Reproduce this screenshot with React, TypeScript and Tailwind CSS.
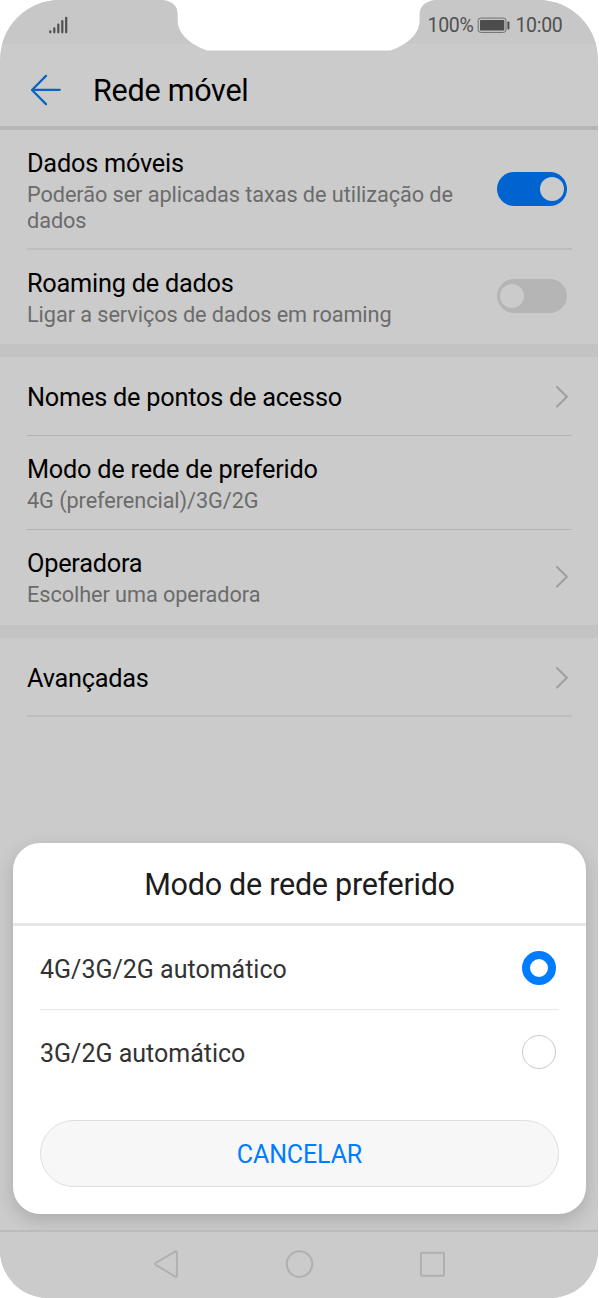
import { useState } from "react";

interface ToggleProps {
  checked: boolean;
  onChange: (checked: boolean) => void;
}

interface OptionProps {
  label: string;
  selected: boolean;
  onSelect: () => void;
}

function SignalIcon() {
  return (
    <svg className="ml-[48px] mt-[15px] h-[20px] w-[21px]" viewBox="0 0 21 20" stroke="#505050" strokeWidth="2.2" strokeLinecap="round">
      <path d="M2.3 16.3v1M6.3 13.3v4M10.3 9.6v7.7M14.3 6v11.3M18.2 2.8v14.5" />
    </svg>
  );
}

function BatteryIcon() {
  return (
    <svg className="h-[17px] w-[34px]" viewBox="0 0 34 17" fill="none">
      <rect x="1.2" y="1.1" width="27.8" height="14.3" rx="2.5" stroke="#6f6f6f" strokeWidth="1" />
      <rect x="3" y="3" width="24.3" height="10.6" rx="0.6" fill="#4c4c4c" />
      <rect x="30.4" y="4.4" width="2" height="8.2" rx="0.8" fill="#4c4c4c" />
    </svg>
  );
}

function BackArrow() {
  return (
    <svg className="h-[32px] w-[32px]" viewBox="0 0 32 32" fill="none" stroke="#0763c5" strokeWidth="2.2" strokeLinecap="round" strokeLinejoin="round">
      <path d="M16 1.9L2 16l14 14.1M2 15.8h27.8" />
    </svg>
  );
}

function Chevron() {
  return (
    <svg className="h-[24px] w-[14px]" viewBox="0 0 14 24" fill="none" stroke="#9f9f9f" strokeWidth="2.1" strokeLinecap="round" strokeLinejoin="round">
      <path d="M2 2.1L11.9 11.8L2 21.5" />
    </svg>
  );
}

function Toggle({ checked, onChange }: ToggleProps) {
  return (
    <button
      role="switch"
      aria-checked={checked}
      onClick={() => onChange(!checked)}
      className={`flex h-[34px] w-[70px] items-center rounded-full ${
        checked ? "justify-end bg-[#0064d0] pr-[3px]" : "justify-start bg-[#b5b5b5] pl-[3px]"
      }`}
    >
      <span className="size-6 rounded-full bg-[#cbcbcb]" />
    </button>
  );
}

function Option({ label, selected, onSelect }: OptionProps) {
  return (
    <button
      role="radio"
      aria-checked={selected}
      onClick={onSelect}
      className="flex h-[84px] w-full items-center justify-between pr-[3px] text-left text-[25px] text-[#333333]"
    >
      <span className="pt-[3px]">{label}</span>
      <span
        className={`size-[34px] rounded-full ${
          selected ? "border-8 border-[#007dff]" : "border-[1.5px] border-[#c9c9c9]"
        }`}
      />
    </button>
  );
}

export default function App() {
  const [mobileData, setMobileData] = useState(true);
  const [roaming, setRoaming] = useState(false);
  const [mode, setMode] = useState("4G/3G/2G automático");

  const titleClass = "text-[25.3px] leading-[30px] tracking-[-0.23px] text-black";
  const subtitleClass = "mt-[3px] text-[21.7px] leading-[26px] tracking-[-0.07px] text-[#6b6b6b]";

  return (
    <div className="h-[1298px] w-[599px] overflow-hidden bg-white font-[Roboto,sans-serif]">
      <div className="relative flex h-full w-[597.5px] flex-col overflow-hidden rounded-t-[60px] rounded-b-[48px] bg-[#cbcbcb]">
        {/* Status bar */}
        <div className="flex h-[44px] shrink-0 justify-between bg-[#c7c7c7]">
          <SignalIcon />
          <div className="flex h-[52px] items-center pr-[35px] text-[19.5px] tracking-[-0.3px] text-[#505050]">
            <span>100%</span>
            <span className="ml-[4px] mr-[4px] -mt-px">
              <BatteryIcon />
            </span>
            <span>10:00</span>
          </div>
        </div>

        {/* Header */}
        <header className="flex h-[86px] shrink-0 items-center border-b-4 border-[#b5b5b5] pt-[10px] pb-[1px] pl-[30px]">
          <BackArrow />
          <h1 className="ml-[31px] pt-[3px] text-[30.5px] tracking-[-0.25px] text-black">Rede móvel</h1>
        </header>

        <div className="flex h-[118px] shrink-0 justify-between pt-[19px] pr-[30.5px] pl-[27px]">
          <div className="w-[450px]">
            <p className={titleClass}>Dados móveis</p>
            <p className={subtitleClass}>
              Poderão ser aplicadas taxas de utilização de
              <br />
              dados
            </p>
          </div>
          <div className="pt-[23px]">
            <Toggle checked={mobileData} onChange={setMobileData} />
          </div>
        </div>
        <div className="mr-[26px] ml-[27px] h-[2px] shrink-0 bg-[#bebebe]" />
        <div className="flex h-[94px] shrink-0 justify-between pt-[19px] pr-[30.5px] pl-[27px]">
          <div>
            <p className={titleClass}>Roaming de dados</p>
            <p className={subtitleClass}>Ligar a serviços de dados em roaming</p>
          </div>
          <div className="pt-[10px]">
            <Toggle checked={roaming} onChange={setRoaming} />
          </div>
        </div>
        <div className="h-[13px] shrink-0 bg-[#c3c3c3]" />

        <div className="flex h-[78px] shrink-0 items-center justify-between pt-[2px] pr-[28.5px] pl-[27px]">
          <p className={`${titleClass} pt-[2px]`}>Nomes de pontos de acesso</p>
          <Chevron />
        </div>
        <div className="mr-[26px] ml-[27px] h-px shrink-0 bg-[#b4b4b4]" />
        <div className="h-[93px] shrink-0 pt-[19px] pl-[27px]">
          <p className={titleClass}>Modo de rede de preferido</p>
          <p className={subtitleClass}>4G (preferencial)/3G/2G</p>
        </div>
        <div className="mr-[26px] ml-[27px] h-px shrink-0 bg-[#b4b4b4]" />
        <div className="flex h-[95px] shrink-0 justify-between pt-[19px] pr-[28.5px] pl-[27px]">
          <div>
            <p className={titleClass}>Operadora</p>
            <p className={subtitleClass}>Escolher uma operadora</p>
          </div>
          <div className="pt-[16px]">
            <Chevron />
          </div>
        </div>
        <div className="h-[13px] shrink-0 bg-[#c3c3c3]" />

        <div className="flex h-[77px] shrink-0 items-center justify-between pt-[2px] pr-[28.5px] pl-[27px]">
          <p className={`${titleClass} pt-[2px]`}>Avançadas</p>
          <Chevron />
        </div>
        <div className="mr-[26px] ml-[27px] h-[2px] shrink-0 bg-[#bebebe]" />

        {/* Navigation bar, stays above the dialog shadow */}
        <nav className="relative z-20 mt-auto flex h-[68px] shrink-0 items-start border-t-2 border-[#bcbcbc] bg-[#cbcbcb] pt-[17px] pl-[150px]">
          <svg className="h-[30px] w-[300px]" viewBox="0 0 300 30" fill="none" stroke="#b0b0b0" strokeWidth="2" strokeLinejoin="round">
            <path d="M26.9 3.6Q26.9 1.7 25.2 2.6L6 13.6Q4.4 14.8 6 16L25.2 27.6Q26.9 28.5 26.9 26.6Z" />
            <circle cx="149.5" cy="15.1" r="12.8" />
            <rect x="271" y="3.8" width="23" height="23" rx="1" />
          </svg>
        </nav>

        {/* Notch */}
        <svg className="absolute top-0 left-[160px] h-[51px] w-[278px]" viewBox="160 0 278 51" fill="white">
          <path d="M163 0C173 1 177.7 7 177.7 14V20C177.7 34 190 44 207 50.6H390.5C408 44 419.6 34 419.6 20V14C419.6 7 425 1 435 0Z" />
        </svg>

        {/* Network mode dialog */}
        <div
          role="dialog"
          className="absolute top-[843px] left-[13px] z-10 h-[371px] w-[573px] rounded-[27px] bg-white shadow-[0_6px_18px_rgba(0,0,0,0.16)]"
        >
          <h2 className="flex h-[83px] items-center justify-center border-b-3 border-[#e7e7e7] pt-[3px] text-[30.5px] tracking-[-0.27px] text-[#1c1c1c]">
            Modo de rede preferido
          </h2>
          <div role="radiogroup" className="px-[27px]">
            <Option
              label="4G/3G/2G automático"
              selected={mode === "4G/3G/2G automático"}
              onSelect={() => setMode("4G/3G/2G automático")}
            />
            <div className="-mt-px h-px bg-[#e8e8e8]" />
            <Option
              label="3G/2G automático"
              selected={mode === "3G/2G automático"}
              onSelect={() => setMode("3G/2G automático")}
            />
          </div>
          <div className="px-[27px] pt-[26px]">
            <button className="h-[67px] w-full rounded-full border border-[#dedede] bg-[#f7f7f7] pt-[2px] text-[25px] tracking-[-0.12px] text-[#007dff]">
              CANCELAR
            </button>
          </div>
        </div>
      </div>
    </div>
  );
}
